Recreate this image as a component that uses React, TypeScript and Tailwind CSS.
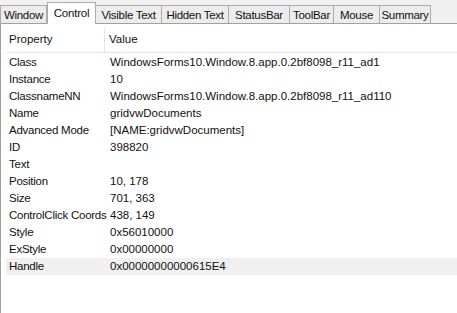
import React from 'react';

const tabs = [
  { label: 'Window', w: 47 },
  { label: 'Control', w: 49, active: true },
  { label: 'Visible Text', w: 66 },
  { label: 'Hidden Text', w: 67 },
  { label: 'StatusBar', w: 61 },
  { label: 'ToolBar', w: 44 },
  { label: 'Mouse', w: 46 },
  { label: 'Summary', w: 51 },
];

const rows: [string, string][] = [
  ['Class', 'WindowsForms10.Window.8.app.0.2bf8098_r11_ad1'],
  ['Instance', '10'],
  ['ClassnameNN', 'WindowsForms10.Window.8.app.0.2bf8098_r11_ad110'],
  ['Name', 'gridvwDocuments'],
  ['Advanced Mode', '[NAME:gridvwDocuments]'],
  ['ID', '398820'],
  ['Text', ''],
  ['Position', '10, 178'],
  ['Size', '701, 363'],
  ['ControlClick Coords', '438, 149'],
  ['Style', '0x56010000'],
  ['ExStyle', '0x00000000'],
  ['Handle', '0x00000000000615E4'],
];

export default function App() {
  return (
    <div
      className="w-[457px] h-[313px] overflow-hidden bg-[#f0f0f0] flex flex-col text-[11.5px] text-[#111]"
      style={{ fontFamily: '"Liberation Sans", Arial, sans-serif' }}
    >
      {/* Tab strip */}
      <div className="h-[23px] flex items-end shrink-0 relative z-10">
        {tabs.map((t) =>
          t.active ? (
            <div
              key={t.label}
              className="h-[22px] -mb-px bg-white border border-b-0 border-[#acacac] flex items-start justify-center pt-[3px] leading-[14px] tracking-[-0.2px]"
              style={{ width: t.w }}
            >
              {t.label}
            </div>
          ) : (
            <div
              key={t.label}
              className="h-[18px] bg-[#ececec] border border-l-0 border-b-0 border-[#acacac] first:border-l flex items-center justify-center leading-[14px] tracking-[-0.3px]"
              style={{ width: t.w }}
            >
              {t.label}
            </div>
          )
        )}
      </div>

      {/* Panel */}
      <div className="flex-1 bg-white border-t border-l border-[#a0a0a0] pl-[5px] pt-[4px]">
        <div className="flex h-[25px] border-b border-[#e5e5e5]">
          <div className="w-[99px] pl-[3px] flex items-center border-r border-[#e5e5e5]">Property</div>
          <div className="pl-[4px] flex items-center">Value</div>
        </div>
        <div className="pt-[1px]">
          {rows.map(([k, v]) => (
            <div
              key={k}
              className={`flex h-[17px] items-center ${k === 'Handle' ? 'bg-[#f0f0f0]' : ''}`}
            >
              <div className="w-[99px] pl-[3px] whitespace-nowrap tracking-[-0.25px]">{k}</div>
              <div className="pl-[5px] whitespace-nowrap">{v}</div>
            </div>
          ))}
        </div>
      </div>
    </div>
  );
}
